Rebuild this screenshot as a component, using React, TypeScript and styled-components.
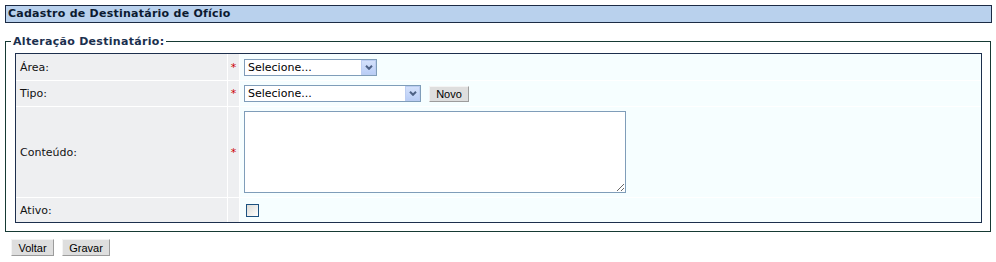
import React from "react"
import styled, { createGlobalStyle } from "styled-components"

const GlobalStyle = createGlobalStyle`
  html, body {
    margin: 0;
    padding: 0;
    background: #ffffff;
  }

  body {
    font-family: "DejaVu Sans", Verdana, sans-serif;
    font-size: 11px;
    color: #000;
  }
`

const Page = styled.div`
  padding: 5px;
`

const TitleBar = styled.div`
  box-sizing: border-box;
  width: 987px;
  height: 18px;
  border: 1px solid #1c2b45;
  background: #b9d1ed;
  padding-left: 2px;
  font-weight: bold;
  font-size: 11px;
  line-height: 16px;
  letter-spacing: 0.25px;
  color: #0c1a30;
`

const Fieldset = styled.fieldset`
  box-sizing: border-box;
  width: 986px;
  margin: 12px 0 0 0;
  border: 1px solid #163a34;
  padding: 5px 8px 8px 5px;
`

const Legend = styled.legend`
  padding: 0 2px;
  font-weight: bold;
  font-size: 11px;
  line-height: 13px;
  letter-spacing: 0.3px;
  color: #1b2f4e;
`

const FormGrid = styled.div`
  display: grid;
  grid-template-columns: 211px 11px 1fr;
  grid-template-rows: 26px 25px 90px 24px;
  gap: 1px;
  margin-left: 4px;
  border: 1px solid #1d2f4d;
  background: #ffffff;
`

const LabelCell = styled.div`
  display: flex;
  align-items: center;
  padding-left: 4px;
  background: #eeeff1;
  color: #111;
`

const StarCell = styled.div`
  display: flex;
  align-items: center;
  justify-content: center;
  background: #eeeff1;
  color: #cc0000;
  font-size: 11px;
`

const ValueCell = styled.div`
  display: flex;
  align-items: center;
  gap: 8px;
  padding-left: 4px;
  background: #f6feff;
`

const SelectWrap = styled.div<{ $width: number }>`
  position: relative;
  width: ${p => p.$width}px;
  height: 17px;
`

const Select = styled.select`
  appearance: none;
  box-sizing: border-box;
  width: 100%;
  height: 100%;
  margin: 0;
  padding: 0 0 0 3px;
  border: 1px solid #7f9db9;
  border-radius: 0;
  background: #ffffff;
  font-family: "DejaVu Sans", Verdana, sans-serif;
  font-size: 11px;
  color: #000;
  outline: none;
`

const ArrowBox = styled.span`
  position: absolute;
  top: 1px;
  right: 1px;
  box-sizing: border-box;
  width: 15px;
  height: 15px;
  border: 1px solid #bccdf1;
  background: linear-gradient(180deg, #d4e1fb 0%, #b9cdf6 100%);
  display: flex;
  align-items: center;
  justify-content: center;
  pointer-events: none;
`

const SmallButton = styled.button<{ $width: number }>`
  box-sizing: border-box;
  width: ${p => p.$width}px;
  height: ${p => (p.$width === 40 ? 16 : 17)}px;
  margin: 0;
  padding: 0;
  border: 1px solid;
  border-color: #f4f4f4 #9c9c9c #9c9c9c #f4f4f4;
  background: #dedede;
  font-family: "Liberation Sans", Arial, sans-serif;
  font-size: 11px;
  color: #000;
  line-height: 14px;
`

const TextArea = styled.textarea`
  box-sizing: border-box;
  width: 382px;
  height: 82px;
  margin: 0;
  padding: 2px;
  border: 1px solid #7f9db9;
  background: #ffffff;
  font-family: "DejaVu Sans", Verdana, sans-serif;
  font-size: 11px;
  outline: none;
`

const CheckBox = styled.input`
  appearance: none;
  box-sizing: border-box;
  width: 13px;
  height: 13px;
  margin: 1px 0 0 2px;
  border: 1px solid #1c5180;
  background: linear-gradient(135deg, #dcdcd7 0%, #ffffff 100%);
`

const Actions = styled.div`
  display: flex;
  gap: 8px;
  margin: 7px 0 0 6px;
`

const Chevron = () => (
  <svg width="8" height="5" viewBox="0 0 8 5">
    <path d="M1 0.8 L4 3.8 L7 0.8" fill="none" stroke="#4d6185" strokeWidth="2" />
  </svg>
)

const DropDown = ({ width }: { width: number }) => (
  <SelectWrap $width={width}>
    <Select defaultValue="">
      <option value="">Selecione...</option>
    </Select>
    <ArrowBox>
      <Chevron />
    </ArrowBox>
  </SelectWrap>
)

export default function App() {
  return <>
    <GlobalStyle />
    <Page>
      <TitleBar>Cadastro de Destinatário de Ofício</TitleBar>

      <Fieldset>
        <Legend>Alteração Destinatário:</Legend>
        <FormGrid>
          <LabelCell>Área:</LabelCell>
          <StarCell>*</StarCell>
          <ValueCell>
            <DropDown width={133} />
          </ValueCell>

          <LabelCell>Tipo:</LabelCell>
          <StarCell>*</StarCell>
          <ValueCell>
            <DropDown width={177} />
            <SmallButton type="button" $width={40}>Novo</SmallButton>
          </ValueCell>

          <LabelCell>Conteúdo:</LabelCell>
          <StarCell>*</StarCell>
          <ValueCell>
            <TextArea />
          </ValueCell>

          <LabelCell>Ativo:</LabelCell>
          <StarCell />
          <ValueCell>
            <CheckBox type="checkbox" />
          </ValueCell>
        </FormGrid>
      </Fieldset>

      <Actions>
        <SmallButton type="button" $width={43}>Voltar</SmallButton>
        <SmallButton type="button" $width={48}>Gravar</SmallButton>
      </Actions>
    </Page>
  </>
}
